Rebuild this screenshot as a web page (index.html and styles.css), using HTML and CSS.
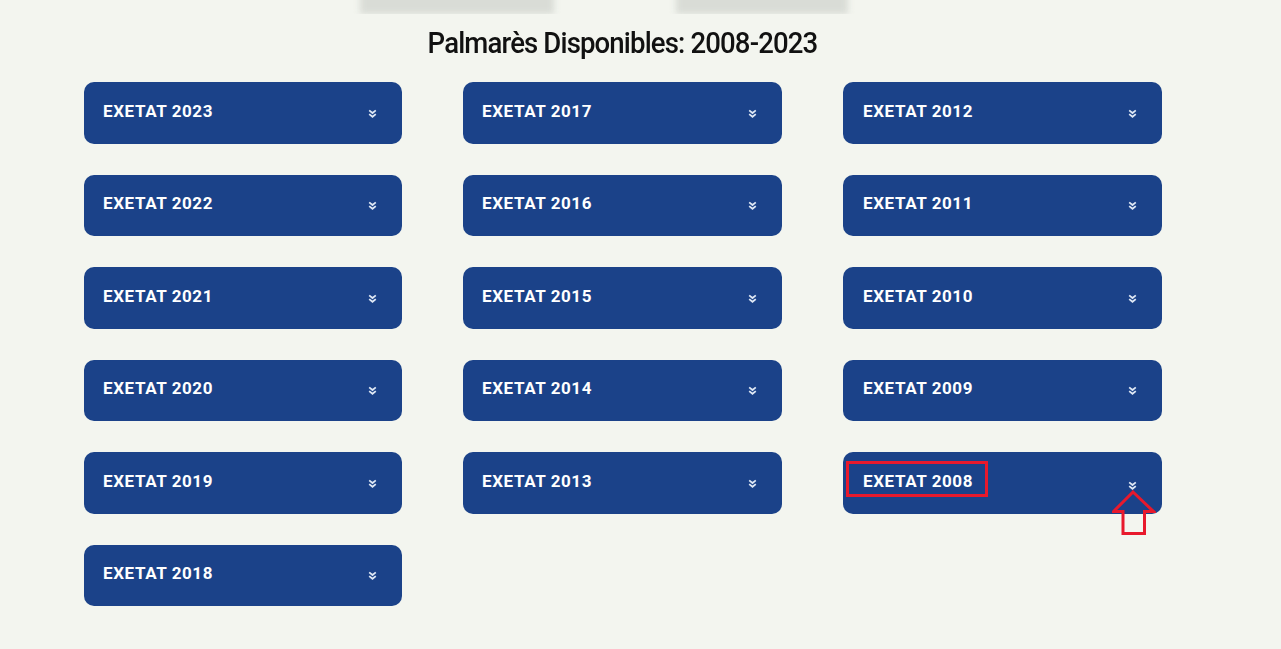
FILE: index.html
```html
<!DOCTYPE html>
<html lang="fr">
<head>
<meta charset="utf-8">
<title>Palmarès Disponibles</title>
<link rel="stylesheet" href="styles.css">
</head>
<body>
<div class="top">
  <div class="shade shade-a"></div>
  <div class="shade shade-b"></div>
</div>
<h2 class="title">Palmarès Disponibles: 2008-2023</h2>
<div class="grid">
  <div class="col">
    <div class="card"><span class="label">EXETAT 2023</span><svg class="chev" viewBox="0 0 10 10"><path d="M2 2.2 5 4.6 8 2.2M2 5.6 5 8 8 5.6"/></svg></div>
    <div class="card"><span class="label">EXETAT 2022</span><svg class="chev" viewBox="0 0 10 10"><path d="M2 2.2 5 4.6 8 2.2M2 5.6 5 8 8 5.6"/></svg></div>
    <div class="card"><span class="label">EXETAT 2021</span><svg class="chev" viewBox="0 0 10 10"><path d="M2 2.2 5 4.6 8 2.2M2 5.6 5 8 8 5.6"/></svg></div>
    <div class="card"><span class="label">EXETAT 2020</span><svg class="chev" viewBox="0 0 10 10"><path d="M2 2.2 5 4.6 8 2.2M2 5.6 5 8 8 5.6"/></svg></div>
    <div class="card"><span class="label">EXETAT 2019</span><svg class="chev" viewBox="0 0 10 10"><path d="M2 2.2 5 4.6 8 2.2M2 5.6 5 8 8 5.6"/></svg></div>
    <div class="card"><span class="label">EXETAT 2018</span><svg class="chev" viewBox="0 0 10 10"><path d="M2 2.2 5 4.6 8 2.2M2 5.6 5 8 8 5.6"/></svg></div>
  </div>
  <div class="col">
    <div class="card"><span class="label">EXETAT 2017</span><svg class="chev" viewBox="0 0 10 10"><path d="M2 2.2 5 4.6 8 2.2M2 5.6 5 8 8 5.6"/></svg></div>
    <div class="card"><span class="label">EXETAT 2016</span><svg class="chev" viewBox="0 0 10 10"><path d="M2 2.2 5 4.6 8 2.2M2 5.6 5 8 8 5.6"/></svg></div>
    <div class="card"><span class="label">EXETAT 2015</span><svg class="chev" viewBox="0 0 10 10"><path d="M2 2.2 5 4.6 8 2.2M2 5.6 5 8 8 5.6"/></svg></div>
    <div class="card"><span class="label">EXETAT 2014</span><svg class="chev" viewBox="0 0 10 10"><path d="M2 2.2 5 4.6 8 2.2M2 5.6 5 8 8 5.6"/></svg></div>
    <div class="card"><span class="label">EXETAT 2013</span><svg class="chev" viewBox="0 0 10 10"><path d="M2 2.2 5 4.6 8 2.2M2 5.6 5 8 8 5.6"/></svg></div>
  </div>
  <div class="col">
    <div class="card"><span class="label">EXETAT 2012</span><svg class="chev" viewBox="0 0 10 10"><path d="M2 2.2 5 4.6 8 2.2M2 5.6 5 8 8 5.6"/></svg></div>
    <div class="card"><span class="label">EXETAT 2011</span><svg class="chev" viewBox="0 0 10 10"><path d="M2 2.2 5 4.6 8 2.2M2 5.6 5 8 8 5.6"/></svg></div>
    <div class="card"><span class="label">EXETAT 2010</span><svg class="chev" viewBox="0 0 10 10"><path d="M2 2.2 5 4.6 8 2.2M2 5.6 5 8 8 5.6"/></svg></div>
    <div class="card"><span class="label">EXETAT 2009</span><svg class="chev" viewBox="0 0 10 10"><path d="M2 2.2 5 4.6 8 2.2M2 5.6 5 8 8 5.6"/></svg></div>
    <div class="card marked"><span class="label">EXETAT 2008</span><svg class="chev" viewBox="0 0 10 10"><path d="M2 2.2 5 4.6 8 2.2M2 5.6 5 8 8 5.6"/></svg>
      <span class="highlight"></span>
      <svg class="arrow" viewBox="0 0 44 46"><path d="M21 2 41.5 21.5H32.5V43.5H11V21.5H1.5Z"/></svg>
    </div>
  </div>
</div>
</body>
</html>
```

FILE: styles.css
```css
html, body {
  margin: 0;
  padding: 0;
}
body {
  background: #f3f5ef;
  font-family: Roboto, "Liberation Sans", sans-serif;
  width: 1281px;
  height: 649px;
  overflow: hidden;
}
.top {
  display: flex;
  height: 14px;
  padding-left: 360px;
  overflow: hidden;
}
.shade {
  height: 22px;
  margin-top: -8px;
  background: #d9dcd6;
  filter: blur(3px);
}
.shade-a {
  width: 194px;
}
.shade-b {
  width: 172px;
  margin-left: 122px;
}
.title {
  margin: 12px 0 0 0;
  text-align: center;
  width: 1245px;
  font-size: 29px;
  line-height: 34px;
  font-weight: 500;
  letter-spacing: -0.9px;
  color: #111;
  transform: scaleX(0.95);
}
.grid {
  display: flex;
  gap: 61px;
  margin: 22px 0 0 84px;
}
.col {
  display: flex;
  flex-direction: column;
  gap: 31px;
  width: 318px;
}
.col + .col {
  width: 319px;
}
.card {
  position: relative;
  height: 61.5px;
  box-sizing: border-box;
  background: #1b4289;
  border-radius: 10px;
  display: flex;
  align-items: center;
  justify-content: space-between;
  padding: 0 24px 0 19px;
  color: #fff;
}
.col + .col + .col .card {
  padding-left: 20px;
}
.label {
  font-weight: 700;
  font-size: 17px;
  letter-spacing: 0.6px;
  margin-top: -4px;
}
.chev {
  width: 11px;
  height: 11px;
  fill: none;
  stroke: #dfe8f5;
  stroke-width: 1.6;
  margin-top: 1px;
}
.marked .chev {
  margin-top: 6px;
}
.highlight {
  position: absolute;
  left: 3px;
  top: 9px;
  width: 142px;
  height: 36px;
  box-sizing: border-box;
  border: 3px solid #e8192c;
}
.arrow {
  position: absolute;
  left: 269px;
  top: 38px;
  width: 44px;
  height: 46px;
  fill: none;
  stroke: #e8192c;
  stroke-width: 3;
}
```
